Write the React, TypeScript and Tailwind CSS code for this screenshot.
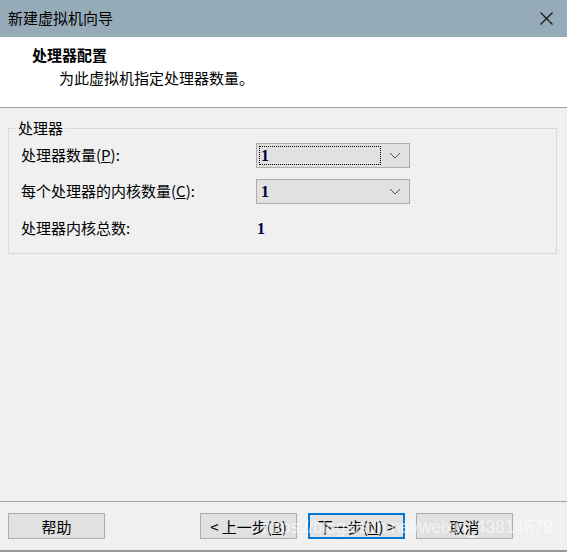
import React from "react";

const ui = "font-['Noto_Sans_CJK_SC','Microsoft_YaHei',sans-serif]";

function Combo({ value, focused }: { value: string; focused?: boolean }) {
  return (
    <div className="w-[154px] h-[25px] bg-[#e1e1e1] border border-[#adadad] flex items-center pl-[2px] pr-[8px]">
      <div className={`flex-1 h-[19px] flex items-center pl-[1px] ${focused ? "border border-dotted border-black" : "border border-transparent"}`}>
        <span className="text-[16px] leading-none text-[#00003c] font-semibold font-['Liberation_Serif',serif]">{value}</span>
      </div>
      <svg width="12" height="7" viewBox="0 0 12 7" className="ml-[8px]">
        <path d="M1 1 L6 6 L11 1" fill="none" stroke="#555" strokeWidth="1" />
      </svg>
    </div>
  );
}

function Btn({ children, primary }: { children: React.ReactNode; primary?: boolean }) {
  return (
    <button
      className={`w-[97px] h-[26px] bg-[#e1e1e1] text-[15px] text-black flex items-center justify-center leading-none ${
        primary ? "border-2 border-[#0078d7]" : "border border-[#adadad]"
      }`}
    >
      {children}
    </button>
  );
}

export default function App() {
  return (
    <div className={`${ui} w-[567px] h-[552px] bg-[#f0f0f0] flex flex-col relative overflow-hidden border-b-2 border-[#9a9a9a]`}>
      {/* title bar */}
      <div className="h-[37px] bg-[#95abb7] flex items-center justify-between pl-[8px] pr-[14px] shrink-0">
        <span className="text-[15px] text-black">新建虚拟机向导</span>
        <svg width="13" height="13" viewBox="0 0 13 13">
          <path d="M0.5 0.5 L12.5 12.5 M12.5 0.5 L0.5 12.5" stroke="#111" strokeWidth="1.1" />
        </svg>
      </div>

      {/* page header */}
      <div className="h-[71px] bg-white border-b border-[#a0a0a0] shrink-0 pl-[32px] pt-[8px]">
        <div className="text-[15px] font-bold text-black leading-[20px]">处理器配置</div>
        <div className="text-[15px] text-black leading-[20px] pl-[27px] mt-[3px]">为此虚拟机指定处理器数量。</div>
      </div>

      {/* body */}
      <div className="flex-1 px-[8px] pt-[11px]">
        <fieldset className="border border-[#d9d9d9] h-[135px] pl-[12px] pr-[12px] mr-[2px]">
          <legend className="ml-[-5px] px-[2px] text-[15px] text-black leading-[18px]">处理器</legend>
          <div className="flex flex-col mt-[6px]">
            <div className="flex items-center h-[25px]">
              <span className="w-[235px] text-[15px] text-black">
                处理器数量(<span className="underline">P</span>):
              </span>
              <Combo value="1" focused />
            </div>
            <div className="flex items-center h-[25px] mt-[11px]">
              <span className="w-[235px] text-[15px] text-black">
                每个处理器的内核数量(<span className="underline">C</span>):
              </span>
              <Combo value="1" />
            </div>
            <div className="flex items-center h-[25px] mt-[12px]">
              <span className="w-[236px] text-[15px] text-black">处理器内核总数:</span>
              <span className="text-[16px] text-[#00003c] font-semibold font-['Liberation_Serif',serif]">1</span>
            </div>
          </div>
        </fieldset>
      </div>

      {/* footer buttons */}
      <div className="h-[48px] border-t border-[#a0a0a0] shrink-0 flex items-start pt-[11px] px-[8px] mb-[1px]">
        <Btn>帮助</Btn>
        <div className="flex-1" />
        <div className="flex gap-[11px] mr-[46px]">
          <Btn>
            &lt; 上一步(<span className="underline">B</span>)
          </Btn>
          <Btn primary>
            下一步(<span className="underline">N</span>) &gt;
          </Btn>
          <Btn>取消</Btn>
        </div>
      </div>

      <div className="absolute left-[262px] top-[514px] text-[17.5px] tracking-[-0.2px] leading-[26px] text-white/60 font-['Liberation_Sans',sans-serif] pointer-events-none">
        https://blog.csdn.net/weixin_43814579
      </div>
    </div>
  );
}
